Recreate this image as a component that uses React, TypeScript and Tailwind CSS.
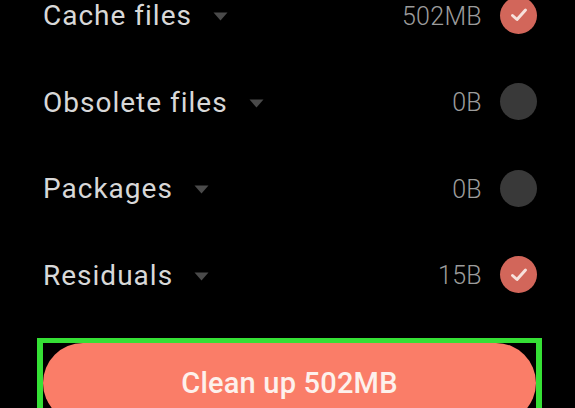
import React from "react";

type Row = { label: string; value: string; checked: boolean };

const rows: Row[] = [
  { label: "Cache files", value: "502MB", checked: true },
  { label: "Obsolete files", value: "0B", checked: false },
  { label: "Packages", value: "0B", checked: false },
  { label: "Residuals", value: "15B", checked: true },
];

function Caret() {
  return (
    <svg width="15" height="9" viewBox="0 0 15 9" className="ml-[21px] mt-[3px] shrink-0">
      <path d="M0.5 0.5 L14.5 0.5 L7.5 8.5 Z" fill="#4a4a4a" />
    </svg>
  );
}

function Check({ checked }: { checked: boolean }) {
  if (!checked) {
    return <div className="w-[37px] h-[37px] rounded-full bg-[#393939] shrink-0" />;
  }
  return (
    <div className="w-[37px] h-[37px] rounded-full bg-[#d2665a] shrink-0 flex items-center justify-center">
      <svg width="20" height="20" viewBox="0 0 20 20">
        <path
          d="M3.5 10.5 L8 14.5 L16.5 5"
          fill="none"
          stroke="#f7e1dc"
          strokeWidth="3"
          strokeLinecap="round"
          strokeLinejoin="round"
        />
      </svg>
    </div>
  );
}

export default function App() {
  return (
    <div
      className="w-[575px] h-[408px] bg-black overflow-hidden"
      style={{ fontFamily: "Roboto, 'Liberation Sans', sans-serif" }}
    >
      <div className="mt-[-28px] flex flex-col">
        {rows.map((r) => (
          <div key={r.label} className="h-[86.5px] flex items-center pl-[43px] pr-[38px]">
            <span className="text-[28px] tracking-[1px] text-[#d8d8d8] leading-none pt-[2px]">{r.label}</span>
            <Caret />
            <div className="flex-1" />
            <span className="text-[25px] font-light text-[#9c9c9c] leading-none tracking-[0.3px] pt-[2px]">{r.value}</span>
            <div className="ml-[18px]">
              <Check checked={r.checked} />
            </div>
          </div>
        ))}
      </div>
      <div className="mt-[20px] ml-[37px] w-[505px] border-[6px] border-t-[5px] border-[#35e035]">
        <div className="h-[80px] rounded-full bg-[#fa7d68] flex items-center justify-center">
          <span className="text-[29px] font-medium text-[#fdf1ec] leading-none tracking-[0.2px]">Clean up 502MB</span>
        </div>
      </div>
    </div>
  );
}
